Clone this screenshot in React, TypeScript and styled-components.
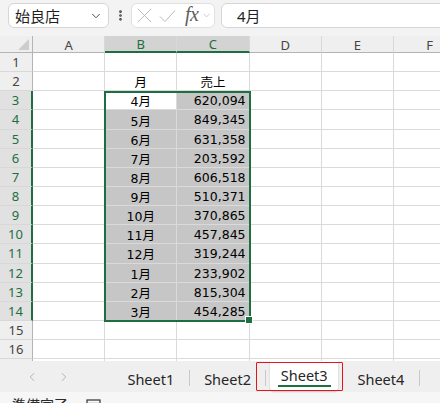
import React from "react";
import styled, { createGlobalStyle } from "styled-components";
import { ChevronDown, ChevronLeft, ChevronRight, EllipsisVertical } from "lucide-react";

const GREEN = "#1d6f42";
const GRID_LINE = "#dadada";
const HEAD_LINE = "#b4b4b4";
const COL_W = 72.2;
const ROW_H = 19.15;
const HEAD_H = 17;
const ROW_COUNT = 17;
const LAST_LABELED_ROW = 16;

const columns = ["A", "B", "C", "D", "E", "F"];

const sales = [
  ["4月", "620,094"],
  ["5月", "849,345"],
  ["6月", "631,358"],
  ["7月", "203,592"],
  ["8月", "606,518"],
  ["9月", "510,371"],
  ["10月", "370,865"],
  ["11月", "457,845"],
  ["12月", "319,244"],
  ["1月", "233,902"],
  ["2月", "815,304"],
  ["3月", "454,285"],
];

const sheets = ["Sheet1", "Sheet2", "Sheet3", "Sheet4"];
const activeSheet = 2;

function isSelectedRow(row: number) {
  return row >= 3 && row <= 14;
}

function isSelectedCol(col: number) {
  return col === 1 || col === 2;
}

function cellText(row: number, col: number) {
  if (row === 2) {
    if (col === 1) return "月";
    if (col === 2) return "売上";
    return "";
  }
  const item = sales[row - 3];
  if (!item) return "";
  if (col === 1) return item[0];
  if (col === 2) return item[1];
  return "";
}

export default function App() {
  const rows = Array.from({ length: ROW_COUNT }, (_, i) => i + 1);

  return (
    <>
      <GlobalStyle />
      <Window>
        <FormulaBar>
          <NameBox>
            <NameText>始良店</NameText>
            <ChevronDown size={14} strokeWidth={1.6} color="#444" />
          </NameBox>
          <DotsSlot>
            <EllipsisVertical size={13} strokeWidth={3} color="#444" />
          </DotsSlot>
          <FxBox>
            {/* cancel */}
            <svg width="15" height="15" viewBox="0 0 15 15">
              <path d="M1 1 L14 14 M14 1 L1 14" stroke="#bcbcbc" strokeWidth="1" fill="none" />
            </svg>
            <FxGap $w={7} />
            {/* enter */}
            <svg width="17" height="14" viewBox="0 0 17 14">
              <path d="M1 7.5 L6 12.5 L16 1.5" stroke="#bcbcbc" strokeWidth="1" fill="none" />
            </svg>
            <FxGap $w={9} />
            <FxLabel>fx</FxLabel>
            <FxGap $w={3} />
            <ChevronDown size={11} strokeWidth={1.4} color="#b0b0b0" />
          </FxBox>
          <FormulaInput>4月</FormulaInput>
        </FormulaBar>

        <SheetArea>
          <Grid>
            <Corner>
              <CornerTriangle />
            </Corner>
            {columns.map((c, ci) => (
              <ColHeader key={c} $selected={isSelectedCol(ci)}>
                {c}
              </ColHeader>
            ))}
            {rows.map((r) => (
              <React.Fragment key={r}>
                <RowHeader $selected={isSelectedRow(r)}>
                  {r <= LAST_LABELED_ROW ? r : ""}
                </RowHeader>
                {columns.map((c, ci) => {
                  const inSel = isSelectedRow(r) && isSelectedCol(ci);
                  const active = r === 3 && ci === 1;
                  const right = ci === 2 && r >= 3;
                  return (
                    <Cell
                      key={c}
                      $shaded={inSel && !active}
                      $align={right ? "flex-end" : "center"}
                    >
                      {cellText(r, ci)}
                    </Cell>
                  );
                })}
              </React.Fragment>
            ))}
          </Grid>
          <SelectionFrame>
            <FillHandle />
          </SelectionFrame>
        </SheetArea>

        <TabBar>
          <NavArrows>
            <ChevronLeft size={14} strokeWidth={1.4} />
            <ChevronRight size={14} strokeWidth={1.4} />
          </NavArrows>
          {sheets.map((s, i) => (
            <React.Fragment key={s}>
              <Tab $active={i === activeSheet}>
                {i === activeSheet ? (
                  <ActiveFace>
                    <TabLabel $active>{s}</TabLabel>
                  </ActiveFace>
                ) : (
                  <TabLabel>{s}</TabLabel>
                )}
                {i === activeSheet && <Highlight />}
              </Tab>
              <TabDivider />
            </React.Fragment>
          ))}
        </TabBar>

        <StatusBar>
          <StatusText>準備完了</StatusText>
          <StatusIcon width="15" height="13" viewBox="0 0 15 13">
            <rect x="1" y="1" width="13" height="11" fill="none" stroke="#333" strokeWidth="1.2" />
            <line x1="1" y1="4.5" x2="14" y2="4.5" stroke="#333" strokeWidth="1.2" />
          </StatusIcon>
        </StatusBar>
      </Window>
    </>
  );
}

const GlobalStyle = createGlobalStyle`
  html, body {
    margin: 0;
    padding: 0;
    background: #ffffff;
  }
  body {
    font-family: "Noto Sans", "Noto Sans CJK JP", sans-serif;
    overflow: hidden;
  }
`;

const Window = styled.div`
  width: 440px;
  height: 403px;
  overflow: hidden;
  display: flex;
  flex-direction: column;
  background: #ffffff;
`;

const FormulaBar = styled.div`
  height: 36px;
  flex-shrink: 0;
  box-sizing: border-box;
  display: flex;
  align-items: flex-start;
  padding: 3px 0 0 8px;
  background: #f3f3f3;
`;

const NameBox = styled.div`
  width: 101px;
  height: 25px;
  flex-shrink: 0;
  box-sizing: border-box;
  display: flex;
  align-items: center;
  justify-content: space-between;
  padding: 0 5px 0 6px;
  background: #ffffff;
  border: 1px solid #d6d6d6;
  border-radius: 6px;
`;

const NameText = styled.span`
  font-family: "Noto Sans CJK JP", sans-serif;
  font-size: 15px;
  color: #1f1f1f;
`;

const DotsSlot = styled.div`
  width: 22px;
  height: 25px;
  flex-shrink: 0;
  display: flex;
  align-items: center;
  justify-content: center;
`;

const FxBox = styled.div`
  width: 84px;
  height: 25px;
  flex-shrink: 0;
  box-sizing: border-box;
  display: flex;
  align-items: center;
  padding-left: 5px;
  background: #ffffff;
  border: 1px solid #e0e0e0;
  border-radius: 6px;
`;

const FxGap = styled.span<{ $w: number }>`
  width: ${(p) => p.$w}px;
  flex-shrink: 0;
`;

const FxLabel = styled.span`
  font-family: "Liberation Serif", serif;
  font-style: italic;
  font-size: 20px;
  line-height: 1;
  color: #5e5e5e;
  margin-top: -3px;
  letter-spacing: -0.5px;
`;

const FormulaInput = styled.div`
  width: 240px;
  height: 25px;
  flex-shrink: 0;
  box-sizing: border-box;
  margin-left: 6px;
  display: flex;
  align-items: center;
  padding-left: 15px;
  background: #ffffff;
  border: 1px solid #d6d6d6;
  border-radius: 6px;
  font-size: 15px;
  color: #1f1f1f;
`;

const SheetArea = styled.div`
  position: relative;
  height: 325px;
  flex-shrink: 0;
  overflow: hidden;
  background: #ffffff;
`;

const Grid = styled.div`
  display: grid;
  grid-template-columns: 33px repeat(6, ${COL_W}px);
  grid-template-rows: ${HEAD_H}px;
  grid-auto-rows: ${ROW_H}px;
  width: max-content;
`;

const Corner = styled.div`
  box-sizing: border-box;
  display: flex;
  align-items: flex-end;
  justify-content: flex-end;
  padding: 0 3px 2px 0;
  background: #efefef;
  border-right: 1px solid ${HEAD_LINE};
  border-bottom: 1px solid ${HEAD_LINE};
`;

const CornerTriangle = styled.span`
  width: 0;
  height: 0;
  border-left: 11px solid transparent;
  border-bottom: 11px solid #cdcdcd;
`;

const ColHeader = styled.div<{ $selected: boolean }>`
  box-sizing: border-box;
  display: flex;
  align-items: center;
  justify-content: center;
  padding-top: 1px;
  font-size: 13px;
  color: ${(p) => (p.$selected ? GREEN : "#444444")};
  background: ${(p) => (p.$selected ? "#d3d3d3" : "#efefef")};
  border-right: 1px solid #d8d8d8;
  border-bottom: ${(p) => (p.$selected ? `2px solid ${GREEN}` : `1px solid ${HEAD_LINE}`)};
`;

const RowHeader = styled.div<{ $selected: boolean }>`
  box-sizing: border-box;
  display: flex;
  align-items: center;
  justify-content: center;
  font-size: 13px;
  color: ${(p) => (p.$selected ? GREEN : "#444444")};
  background: ${(p) => (p.$selected ? "#e1e1e1" : "#efefef")};
  border-right: ${(p) => (p.$selected ? `2px solid ${GREEN}` : `1px solid ${HEAD_LINE}`)};
  border-bottom: 1px solid #d8d8d8;
`;

const Cell = styled.div<{ $shaded: boolean; $align: string }>`
  box-sizing: border-box;
  display: flex;
  align-items: center;
  justify-content: ${(p) => p.$align};
  padding: 1px 3px 0 3px;
  overflow: hidden;
  white-space: nowrap;
  font-family: "DejaVu Sans", "Noto Sans CJK JP", sans-serif;
  font-size: 12.5px;
  color: #000000;
  background: ${(p) => (p.$shaded ? "#c6c6c6" : "#ffffff")};
  border-right: 1px solid ${GRID_LINE};
  border-bottom: 1px solid ${GRID_LINE};
`;

const SelectionFrame = styled.div`
  position: absolute;
  left: ${33 + COL_W - 1}px;
  top: ${HEAD_H + 2 * ROW_H - 0.5}px;
  width: ${2 * COL_W + 2.4}px;
  height: ${12 * ROW_H + 1}px;
  box-sizing: border-box;
  border: 2px solid ${GREEN};
  pointer-events: none;
`;

const FillHandle = styled.span`
  position: absolute;
  right: -3px;
  bottom: -3px;
  width: 5.5px;
  height: 5.5px;
  background: ${GREEN};
  box-shadow: 0 0 0 1px #ffffff;
`;

const TabBar = styled.div`
  height: 31px;
  flex-shrink: 0;
  display: flex;
  align-items: stretch;
  background: #efefef;
`;

const NavArrows = styled.div`
  width: 113px;
  flex-shrink: 0;
  box-sizing: border-box;
  display: flex;
  align-items: center;
  gap: 18px;
  padding-left: 25px;
  color: #a8a8a8;
`;

const Tab = styled.div<{ $active: boolean }>`
  position: relative;
  width: 75.7px;
  flex-shrink: 0;
  box-sizing: border-box;
  display: flex;
  justify-content: center;
  align-items: ${(p) => (p.$active ? "stretch" : "center")};
  padding: ${(p) => (p.$active ? "0 4px 1px 4px" : "5px 0 0 0")};
`;

const ActiveFace = styled.div`
  flex: 1;
  display: flex;
  justify-content: center;
  align-items: center;
  background: #ffffff;
  border-radius: 0 0 4px 4px;
  box-shadow: 0 1px 2px rgba(0, 0, 0, 0.18);
`;

const TabLabel = styled.span<{ $active?: boolean }>`
  display: inline-block;
  font-size: 14.5px;
  line-height: 18px;
  color: #262626;
  padding: ${(p) => (p.$active ? "1px 3px 1px 3px" : "0")};
  border-bottom: ${(p) => (p.$active ? `2px solid ${GREEN}` : "none")};
`;

const Highlight = styled.span`
  position: absolute;
  left: -10.4px;
  right: -1.2px;
  top: 0.5px;
  bottom: 1px;
  border: 1.5px solid #e3141c;
  border-radius: 1px;
  pointer-events: none;
`;

const TabDivider = styled.span`
  width: 1px;
  height: 16px;
  flex-shrink: 0;
  align-self: center;
  margin-top: 2px;
  background: #c9c9c9;
`;

const StatusBar = styled.div`
  flex: 1;
  display: flex;
  align-items: flex-start;
  gap: 18px;
  padding: 2px 0 0 12px;
  background: #f6f6f6;
`;

const StatusText = styled.span`
  font-family: "Noto Sans CJK JP", sans-serif;
  font-size: 14px;
  line-height: 20px;
  color: #2b2b2b;
`;

const StatusIcon = styled.svg`
  margin-top: 5px;
  flex-shrink: 0;
`;
